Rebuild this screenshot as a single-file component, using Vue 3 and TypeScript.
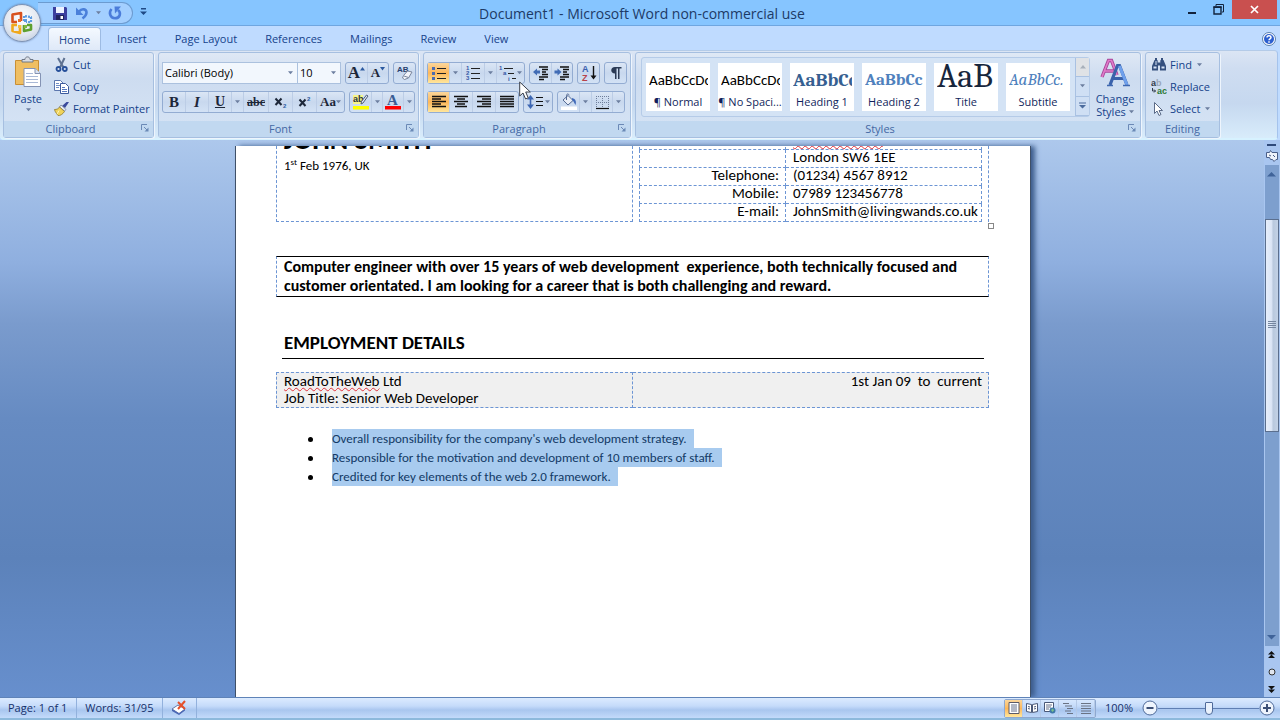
<script setup lang="ts">
import { h, ref } from 'vue'

interface StyleCard {
  sample: string
  name: string
  kind: string
}

// Small drop-down triangle used throughout the ribbon
const Caret = () => h('svg', { width: 5, height: 4, viewBox: '0 0 6 4' }, [h('path', { d: 'M0 0h6L3 3.5z', fill: '#6d7fa0' })])

// Corner arrow that opens a group's dialog
const Corner = () =>
  h('svg', { width: 8, height: 8, viewBox: '0 0 8 8' }, [
    h('path', { d: 'M.5 6V.5H6M3 3l3 3', fill: 'none', stroke: '#6b89b6' }),
    h('path', { d: 'M7.5 3.5v4h-4z', fill: '#6b89b6' }),
  ])

const tabs: string[] = ['Home', 'Insert', 'Page Layout', 'References', 'Mailings', 'Review', 'View']
const activeTab = ref<string>('Home')
const fontName = ref<string>('Calibri (Body)')
const fontSize = ref<string>('10')
const zoom = ref<number>(100)

const styleCards: StyleCard[] = [
  { sample: 'AaBbCcDc', name: '¶ Normal', kind: 'plain' },
  { sample: 'AaBbCcDc', name: '¶ No Spaci...', kind: 'plain' },
  { sample: 'AaBbCc', name: 'Heading 1', kind: 'h1' },
  { sample: 'AaBbCc', name: 'Heading 2', kind: 'h2' },
  { sample: 'AaB', name: 'Title', kind: 'title' },
  { sample: 'AaBbCc.', name: 'Subtitle', kind: 'sub' },
]

const contacts: { label: string; value: string }[] = [
  { label: '', value: 'London SW6 1EE' },
  { label: 'Telephone:', value: '(01234) 4567 8912' },
  { label: 'Mobile:', value: '07989 123456778' },
  { label: 'E-mail:', value: 'JohnSmith@livingwands.co.uk' },
]

const bullets: string[] = [
  "Overall responsibility for the company's web development strategy.",
  'Responsible for the motivation and development of 10 members of staff.',
  'Credited for key elements of the web 2.0 framework.',
]
</script>

<template>
  <div class="app">
    <header class="titlebar">
      <div class="qat">
        <button class="bare" aria-label="Save">
          <svg width="16" height="16" viewBox="0 0 16 16"><path d="M1 2h13l1 1v12H1z" fill="#3b3f9e" /><path d="M4 2h8v6H4z" fill="#eef3ff" /><path d="M4 10h8v5H4z" fill="#20245e" /><path d="M8.500 11h2.500v3H8.500z" fill="#fff" /></svg>
        </button>
        <button class="bare" aria-label="Undo">
          <svg width="16" height="16" viewBox="0 0 16 16"><path d="M5 6.500c3-3.500 7.500-2.500 7.500 1 0 3-2 4.500-4 6" fill="none" stroke="#4b80da" stroke-width="2.600" /><path d="M2 2.500v7.500h7.500z" fill="#4b80da" /></svg>
        </button>
        <button class="bare narrow" aria-label="Undo history"><Caret /></button>
        <button class="bare" aria-label="Repeat">
          <svg width="16" height="16" viewBox="0 0 16 16"><path d="M4.500 4C1.500 7.500 3 13.300 8 13.300S14.500 8 11 5" fill="none" stroke="#4b7cda" stroke-width="2.600" /><path d="M7.500 1.500H14l-6 7z" fill="#4b7cda" /></svg>
        </button>
      </div>
      <button class="bare custom" aria-label="Customize Quick Access Toolbar"><svg width="7" height="8" viewBox="0 0 7 8"><path d="M1 0h5v1.500H1zM0 3.500h7L3.500 7z" fill="#1f4a86" /></svg></button>
      <h1 class="caption">Document1 - Microsoft Word non-commercial use</h1>
      <div class="winbtns">
        <button class="win" aria-label="Minimize"><svg width="10" height="10" viewBox="0 0 10 10"><path d="M1 7h8v2H1z" fill="#12233c" /></svg></button>
        <button class="win" aria-label="Restore"><svg width="11" height="11" viewBox="0 0 11 11"><path d="M3 2V.500h7.500V8H9" fill="none" stroke="#12233c" /><path d="M1 3h7v7H1z" fill="none" stroke="#12233c" stroke-width="1.400" /><path d="M.500 2.500h8V4h-8z" fill="#12233c" /></svg></button>
        <button class="win close" aria-label="Close"><svg width="9" height="9" viewBox="0 0 9 9"><path d="M1 1l7 7M8 1L1 8" stroke="#fff" stroke-width="1.700" /></svg></button>
      </div>
    </header>

    <button class="office" aria-label="Office Button">
      <svg width="24" height="24" viewBox="0 0 24 24" fill="none" stroke-linejoin="round">
        <path d="M7 11H2.500V3.500L11 2v8" stroke="#d8511d" stroke-width="2.600" />
        <path d="M14 10V5l7 1v5h-5" stroke="#5c9be0" stroke-width="2.200" stroke-dasharray="2 1" />
        <path d="M10 14v8l-7.500-2v-6H7" stroke="#f0a81c" stroke-width="2.600" />
        <path d="M14 14v6l7-1.500V14h-4" stroke="#5ea02e" stroke-width="2.600" />
        <path d="M8 8h3v3H8z" fill="#e8702a" /><path d="M14 8h3v3h-3z" fill="#5c9be0" /><path d="M8 14h3v3H8z" fill="#f5c043" /><path d="M14 14h3v3h-3z" fill="#7fb840" />
      </svg>
    </button>

    <nav class="tabs">
      <button v-for="t in tabs" :key="t" class="tab" :class="{ active: t === activeTab }" @click="activeTab = t">{{ t }}</button>
      <button class="bare help" aria-label="Help">
        <svg width="14" height="14" viewBox="0 0 14 14"><circle cx="7" cy="7" r="6.500" fill="#fff" stroke="#5a7fae" /><circle cx="7" cy="7" r="5" fill="#2c5fcf" /><path d="M5 5.500C5 3 9 3 9 5.500 9 7 7 6.800 7 8.300M7 9.300v1.500" fill="none" stroke="#fff" stroke-width="1.500" /></svg>
      </button>
    </nav>

    <section class="ribbon">
      <div class="group clipboard">
        <div class="body">
          <button class="big paste">
            <svg width="28" height="32" viewBox="0 0 28 32"><path d="M1.500 4.500h23v24h-23z" fill="#efbe62" stroke="#c98f34" /><path d="M8 6V3.500h3C11 0 16 0 16 3.500h3V6z" fill="#d9dde4" stroke="#6f7886" /><path d="M10 12.500h11l5.500 5v13H10z" fill="#fff" stroke="#8493b4" /><path d="M21 12.500v5h5.500" fill="#dbe4f3" stroke="#8493b4" /><path d="M12 17.500h7M12 20.500h12M12 23.500h12M12 26.500h12" stroke="#a9b9d6" /></svg>
            <span>Paste</span>
            <Caret />
          </button>
          <div class="stack">
            <button class="item">
              <svg width="16" height="16" viewBox="0 0 16 16" fill="none"><path d="M4 1l5.500 9.500M10.500 1L6 10.500" stroke="#5f7291" stroke-width="2" /><circle cx="4.500" cy="12" r="2" stroke="#27509a" stroke-width="1.800" /><circle cx="10.800" cy="12" r="2" stroke="#27509a" stroke-width="1.800" /></svg>Cut
            </button>
            <button class="item">
              <svg width="16" height="16" viewBox="0 0 16 16"><path d="M.500 1.500h6l2.500 2.500v7.500H.500z" fill="#fff" stroke="#5c77ae" /><path d="M2 4.500h3M2 6.500h4M2 8.500h3" stroke="#6f8cc4" /><path d="M6.500 4.500h5l3 3v7h-8z" fill="#fff" stroke="#3c5a9c" /><path d="M8 8.500h3M8 10.500h5M8 12.500h5" stroke="#5578bd" /></svg>Copy
            </button>
            <button class="item">
              <svg width="16" height="16" viewBox="0 0 16 16"><path d="M15 1l-4 6-3-2 4.500-4z" fill="#3a4a9c" /><path d="M7 4l5 4.500-1.500 1.500-5-4z" fill="#e9edf5" stroke="#74819a" stroke-width=".800" /><path d="M5.500 6l5 4.500C9 13 6 15 4 14.500 3 13 1 11 .500 8.500 2.500 8.500 4.500 8 5.500 6z" fill="#f0d35a" stroke="#8f7a2a" stroke-width=".800" /><path d="M5 9.500L3 13" stroke="#fff6bd" /></svg>Format Painter
            </button>
          </div>
        </div>
        <div class="foot"><span>Clipboard</span><button class="bare launch" aria-label="Clipboard options"><Corner /></button></div>
      </div>

      <div class="group font">
        <div class="body rows">
          <div class="row">
            <div class="combo wide"><select v-model="fontName" aria-label="Font"><option>Calibri (Body)</option></select><Caret class="drop" /></div>
            <div class="combo slim"><select v-model="fontSize" aria-label="Font size"><option>10</option></select><Caret class="drop" /></div>
            <div class="strip">
              <button class="tool t21" aria-label="Grow font"><span class="glyph g17">A</span><svg class="tri" width="5" height="4" viewBox="0 0 5 4"><path d="M0 3.500h5L2.500 0z" fill="#2c5aa0" /></svg></button>
              <button class="tool t21" aria-label="Shrink font"><span class="glyph g13">A</span><svg class="tri" width="5" height="4" viewBox="0 0 5 4"><path d="M0 0h5L2.500 3.500z" fill="#2c5aa0" /></svg></button>
            </div>
            <div class="strip">
              <button class="tool t21" aria-label="Clear formatting"><svg width="18" height="18" viewBox="0 0 18 18"><text x="1" y="8" font-size="8" font-weight="bold" font-family="Liberation Sans, sans-serif" fill="#26406e">AB</text><path d="M7.500 11.500l4-4.500 4.500 1-3.500 6-4 1.500-2-1.500z" fill="#f2f4fa" stroke="#7a869e" /><path d="M8 12l4.500 1.500" stroke="#7a869e" /></svg></button>
            </div>
          </div>
          <div class="row">
            <div class="strip">
              <button class="tool t22"><span class="glyph g15">B</span></button>
              <button class="tool t23"><span class="glyph g15 ital">I</span></button>
              <button class="tool t23"><span class="glyph g14 under">U</span></button>
              <button class="tool t12" aria-label="Underline style"><Caret /></button>
              <button class="tool t25"><span class="glyph g12 strike">abc</span></button>
              <button class="tool t24" aria-label="Subscript"><svg width="14" height="14" viewBox="0 0 14 14"><path d="M1.500 3.500l6 6.500M7.500 3.500l-6 6.500" stroke="#1d2739" stroke-width="2" /><text x="9" y="13" font-size="6" font-weight="bold" font-family="Liberation Sans, sans-serif" fill="#2c5aa0">2</text></svg></button>
              <button class="tool t24" aria-label="Superscript"><svg width="14" height="14" viewBox="0 0 14 14"><path d="M1.500 4.500l6 6.500M7.500 4.500l-6 6.500" stroke="#1d2739" stroke-width="2" /><text x="9" y="6" font-size="6" font-weight="bold" font-family="Liberation Sans, sans-serif" fill="#2c5aa0">2</text></svg></button>
              <button class="tool t28" aria-label="Change case"><span class="glyph g13">Aa</span><Caret /></button>
            </div>
            <div class="strip">
              <button class="tool t21" aria-label="Text highlight color"><svg width="18" height="18" viewBox="0 0 18 18"><path d="M1 2h10v9H1z" fill="#f7f58a" /><text x="1" y="9" font-size="9" font-family="Liberation Sans, sans-serif" font-weight="bold" fill="#2b3240">ab</text><path d="M16 3l-5 7-2 1 .500-2.500L14.500 2z" fill="#e3e8f2" stroke="#4c5d7c" /><path d="M1 13h16v3.500H1z" fill="#ff0" /></svg></button>
              <button class="tool t11" aria-label="Highlight colors"><Caret /></button>
              <button class="tool t21" aria-label="Font color"><svg width="18" height="18" viewBox="0 0 18 18"><text x="3" y="12" font-size="15" font-family="Liberation Serif, serif" font-weight="bold" fill="#3a5d94">A</text><path d="M1 13h16v3.500H1z" fill="#f00" /></svg></button>
              <button class="tool t11" aria-label="Font colors"><Caret /></button>
            </div>
          </div>
        </div>
        <div class="foot"><span>Font</span><button class="bare launch" aria-label="Font options"><Corner /></button></div>
      </div>

      <div class="group para">
        <div class="body rows">
          <div class="row">
            <div class="strip">
              <button class="tool t21 on" aria-label="Bullets"><svg width="16" height="16" viewBox="0 0 16 16"><path d="M1 2h3v3H1zM1 7h3v3H1zM1 12h3v3H1z" fill="#4c6cb0" /><path d="M6 3.500h9M6 8.500h9M6 13.500h9" stroke="#222" stroke-width="1.200" /></svg></button>
              <button class="tool t12" aria-label="Bullet library"><Caret /></button>
              <button class="tool t23" aria-label="Numbering"><svg width="16" height="16" viewBox="0 0 16 16"><g font-size="6" font-weight="bold" font-family="Liberation Sans, sans-serif" fill="#3557a5"><text x="1" y="5">1</text><text x="1" y="10">2</text><text x="1" y="15">3</text></g><path d="M6 3.500h9M6 8.500h9M6 13.500h9" stroke="#222" stroke-width="1.200" /></svg></button>
              <button class="tool t12" aria-label="Numbering library"><Caret /></button>
              <button class="tool t28" aria-label="Multilevel list"><svg width="18" height="16" viewBox="0 0 18 16"><g font-size="6" font-weight="bold" font-family="Liberation Sans, sans-serif" fill="#3557a5"><text x="0" y="5">1</text><text x="4" y="10">a</text><text x="9" y="16">i</text></g><path d="M5 3.500h9M9 8.500h6M13 13.500h4" stroke="#222" stroke-width="1.200" /></svg><Caret /></button>
            </div>
            <div class="strip">
              <button class="tool t21" aria-label="Decrease indent"><svg width="16" height="16" viewBox="0 0 16 16"><path d="M6 2h9M9 4.500h6M9 7h4M9 9.500h6M6 12h9M6 14.500h5" stroke="#111" stroke-width="1.300" /><path d="M0 7l4-3.500v2h3v3H4v2z" fill="#416cb5" /></svg></button>
              <button class="tool t21" aria-label="Increase indent"><svg width="16" height="16" viewBox="0 0 16 16"><path d="M6 2h9M9 4.500h6M9 7h4M9 9.500h6M6 12h9M6 14.500h5" stroke="#111" stroke-width="1.300" /><path d="M7.500 7l-4-3.500v2h-3v3h3v2z" fill="#416cb5" /></svg></button>
            </div>
            <div class="strip">
              <button class="tool t21" aria-label="Sort"><svg width="16" height="18" viewBox="0 0 16 18"><g font-size="9" font-weight="bold" font-family="Liberation Sans, sans-serif"><text x="1" y="8" fill="#3b5fae">A</text><text x="1" y="17" fill="#b8424a">Z</text></g><path d="M12.500 2v12" stroke="#111" stroke-width="1.400" /><path d="M9.500 11.500h6l-3 4z" fill="#111" /></svg></button>
            </div>
            <div class="strip">
              <button class="tool t21" aria-label="Show formatting marks"><svg width="14" height="14" viewBox="0 0 14 14"><path d="M12.500 1H6C1 1 1 7.500 6 7.500V13h1.500V2.500H9V13h1.500V2.500h2z" fill="#2b3a55" /></svg></button>
            </div>
          </div>
          <div class="row">
            <div class="strip">
              <button class="tool t21 on" aria-label="Align left"><svg width="16" height="14" viewBox="0 0 16 14"><path d="M1 1.500h14M1 4h9M1 6.500h14M1 9h9M1 11.500h14" stroke="#111" stroke-width="1.300" /></svg></button>
              <button class="tool t23" aria-label="Center"><svg width="16" height="14" viewBox="0 0 16 14"><path d="M1 1.500h14M4 4h8M1 6.500h14M4 9h8M2 11.500h12" stroke="#111" stroke-width="1.300" /></svg></button>
              <button class="tool t23" aria-label="Align right"><svg width="16" height="14" viewBox="0 0 16 14"><path d="M1 1.500h14M6 4h9M1 6.500h14M6 9h9M1 11.500h14" stroke="#111" stroke-width="1.300" /></svg></button>
              <button class="tool t23" aria-label="Justify"><svg width="16" height="14" viewBox="0 0 16 14"><path d="M1 1.500h14M1 4h14M1 6.500h14M1 9h14M1 11.500h14" stroke="#111" stroke-width="1.300" /></svg></button>
            </div>
            <div class="strip">
              <button class="tool t28" aria-label="Line spacing"><svg width="16" height="16" viewBox="0 0 16 16"><path d="M3.500 4v8" stroke="#3d67b3" stroke-width="1.600" /><path d="M0 5.500h7L3.500 1zM0 10.500h7L3.500 15z" fill="#3d67b3" /><path d="M9 3.500h7M9 7.500h7M9 11.500h7" stroke="#111" stroke-width="1.200" /></svg><Caret class="gap" /></button>
            </div>
            <div class="strip">
              <button class="tool t21" aria-label="Shading"><svg width="18" height="18" viewBox="0 0 18 18"><path d="M3 7l5-4.500 5 5L8 12z" fill="#e8edf6" stroke="#546a93" /><path d="M6.500 7V2.500c0-2 2.500-2 2.500 0" fill="none" stroke="#546a93" /><path d="M12 5c4 1 4.500 4 3.500 7-1.500-2-1.500-4-3.500-5z" fill="#4069b8" /><path d="M1 13.500h16V17H1z" fill="#fff" /></svg></button>
              <button class="tool t12" aria-label="Shading colors"><Caret /></button>
              <button class="tool t21" aria-label="Borders"><svg width="15" height="15" viewBox="0 0 15 15"><path d="M1 1.500h13M1 7.500h13M1.500 1v12M7.500 1v12M13.500 1v12" stroke="#6f7f9b" stroke-dasharray="1 1" /><path d="M1 13.500h13" stroke="#111" stroke-width="1.200" /></svg></button>
              <button class="tool t12" aria-label="Border styles"><Caret /></button>
            </div>
          </div>
        </div>
        <div class="foot"><span>Paragraph</span><button class="bare launch" aria-label="Paragraph options"><Corner /></button></div>
      </div>

      <div class="group styles">
        <div class="body">
          <div class="gallery">
            <div class="cards">
              <button v-for="c in styleCards" :key="c.name" class="card">
                <span class="sample" :class="c.kind">{{ c.sample }}</span>
                <span class="name">{{ c.name }}</span>
              </button>
            </div>
            <div class="spin">
              <button aria-label="Previous styles" class="dim"><svg width="6" height="4" viewBox="0 0 6 4"><path d="M0 3.500h6L3 0z" fill="#a8b0bb" /></svg></button>
              <button aria-label="Next styles"><Caret /></button>
              <button aria-label="More styles"><svg width="7" height="7" viewBox="0 0 7 7"><path d="M0 .500h7v1H0zM0 3h7L3.500 6.500z" fill="#4c6c9e" /></svg></button>
            </div>
          </div>
          <button class="big change">
            <svg width="30" height="30" viewBox="0 0 30 30" fill="none"><path d="M2 19L8.500 2.500h3L17 17M4.500 13h9" stroke="#a8459a" stroke-width="3.400" /><path d="M2 19L8.500 2.500h3L17 17M4.500 13h9" stroke="#e07cc9" stroke-width="1.600" /><path d="M10 27L17.500 7.500h2L27 27M13 20.500h11" stroke="#3a62ab" stroke-width="3.200" /><path d="M19.500 8L27 27" stroke="#6fa0ec" stroke-width="3" /><path d="M7 27.500h6M23 27.500h7" stroke="#3f68b0" stroke-width="1.500" /></svg>
            <span>Change</span>
            <span class="withcaret">Styles <Caret /></span>
          </button>
        </div>
        <div class="foot"><span>Styles</span><button class="bare launch" aria-label="Style options"><Corner /></button></div>
      </div>

      <div class="group editing">
        <div class="body">
          <div class="stack">
            <button class="item">
              <svg width="16" height="16" viewBox="0 0 16 16"><path d="M3.500 3h3l.500 4v6.500H1V9zM9.500 3h3L15 9v4.500H9V7z" fill="#35507e" /><path d="M4 1h2v2H4zM10 1h2v2h-2zM7 5.500h2v3H7z" fill="#35507e" /><path d="M2.500 9.500h3v2h-3zM10.500 9.500h3v2h-3zM4.500 4h1v4h-1z" fill="#d5e2f5" /></svg>Find<Caret class="gap" />
            </button>
            <button class="item">
              <svg width="16" height="16" viewBox="0 0 16 16" font-size="9" font-weight="bold" font-family="Liberation Sans, sans-serif"><text x="0" y="7" fill="#333c4c">a</text><text x="5" y="7" fill="#9aa6b8">b</text><text x="6" y="15" fill="#2c7a35">ac</text><path d="M1.500 9v3h3M3 10.500L4.500 12 3 13.500" stroke="#333c4c" fill="none" /></svg>Replace
            </button>
            <button class="item">
              <svg width="16" height="16" viewBox="0 0 16 16"><path d="M3.500 1.500v11l2.500-2.500 2 4.500 2-1-2-4h3.500z" fill="#fff" stroke="#5b6b88" /></svg>Select<Caret class="gap" />
            </button>
          </div>
        </div>
        <div class="foot"><span>Editing</span></div>
      </div>
    </section>

    <main class="workspace">
      <div class="canvas">
        <article class="page">
          <div class="cvtop">
            <div class="who">
              <h2>JOHN SMITH</h2>
              <p>1<sup>st</sup> Feb 1976, UK</p>
            </div>
            <table class="contact">
              <tbody>
                <tr><th></th><td><span class="typo">Roadtotheweb</span> Rg</td></tr>
                <tr v-for="c in contacts" :key="c.value"><th scope="row">{{ c.label }}</th><td>{{ c.value }}</td></tr>
              </tbody>
            </table>
            <span class="handle"></span>
          </div>
          <p class="summary">Computer engineer with over 15 years of web development&nbsp; experience, both technically focused and<br />customer orientated. I am looking for a career that is both challenging and reward.</p>
          <h3>EMPLOYMENT DETAILS</h3>
          <table class="job">
            <tbody>
              <tr>
                <td><span class="typo">RoadToTheWeb</span> Ltd<br />Job Title: Senior Web Developer</td>
                <td class="dates">1st Jan 09&nbsp; to&nbsp; current</td>
              </tr>
            </tbody>
          </table>
          <ul class="bullets">
            <li v-for="b in bullets" :key="b"><span>{{ b }}</span></li>
          </ul>
        </article>
      </div>
      <aside class="scroll">
        <span class="split"></span>
        <button class="bare ruler" aria-label="View ruler"><svg width="12" height="12" viewBox="0 0 12 12"><path d="M.500 2.500h3l1-2 1.500 2h5.500v7H10l-2 2-1.500-2h-2l-1-2h-3z" fill="#eef3fb" stroke="#4a5f88" /><path d="M3 5l2 1M7 5l2 2" stroke="#4a5f88" /></svg></button>
        <button class="bare arrow" aria-label="Scroll up"><svg width="9" height="5" viewBox="0 0 9 5"><path d="M0 4.500h9L4.500 0z" fill="#3f6399" /></svg></button>
        <div class="track"><div class="thumb"><svg width="8" height="8" viewBox="0 0 8 8"><path d="M0 .500h8M0 2.500h8M0 4.500h8M0 6.500h8" stroke="#75869f" /></svg></div></div>
        <button class="bare arrow" aria-label="Scroll down"><svg width="9" height="5" viewBox="0 0 9 5"><path d="M0 0h9L4.500 4.500z" fill="#3f6399" /></svg></button>
        <button class="bare nav" aria-label="Previous page"><svg width="7" height="8" viewBox="0 0 7 8"><path d="M0 3.500h7L3.500 0zM0 7h7L3.500 3.500z" fill="#111" /></svg></button>
        <button class="bare nav" aria-label="Select browse object"><svg width="8" height="8" viewBox="0 0 8 8"><circle cx="4" cy="4" r="3" fill="#dfe5ee" stroke="#333" /></svg></button>
        <button class="bare nav" aria-label="Next page"><svg width="7" height="8" viewBox="0 0 7 8"><path d="M0 1h7L3.500 4.500zM0 4.500h7L3.500 8z" fill="#111" /></svg></button>
      </aside>
    </main>

    <footer class="status">
      <button class="bare cell">Page: 1 of 1</button>
      <button class="bare cell">Words: 31/95</button>
      <button class="bare cell" aria-label="Proofing errors"><svg width="16" height="16" viewBox="0 0 16 16"><path d="M1 9l6-4 7 4-6 4.500z" fill="#fff" stroke="#6679a8" /><path d="M1 9v2l7 4 6-4.500V9l-6 4.500z" fill="#4a66b5" /><path d="M7 2l7 7M14 1L7 9" stroke="#e4502b" stroke-width="2" /></svg></button>
      <span class="grow"></span>
      <div class="views">
        <button class="on" aria-label="Print layout"><svg width="12" height="12" viewBox="0 0 12 12"><path d="M1 .500h10v11H1z" fill="#fff" stroke="#5a5a68" /><path d="M3 3h6M3 5h6M3 7h6M3 9h6" stroke="#66708a" /></svg></button>
        <button aria-label="Full screen reading"><svg width="12" height="12" viewBox="0 0 12 12"><path d="M.500 1.500l5 1v8l-5-1zM11.500 1.500l-5 1v8l5-1z" fill="#fff" stroke="#4a5877" /><path d="M2 4.500l2 .500M2 6.500l2 .500M8 5l2-.500M8 7l2-.500" stroke="#4a5877" /></svg></button>
        <button aria-label="Web layout"><svg width="12" height="12" viewBox="0 0 12 12"><path d="M.500.500h9v9h-9z" fill="#fff" stroke="#4a5877" /><path d="M2 3h6M2 5h5M2 7h3" stroke="#66708a" /><circle cx="8.500" cy="8.500" r="3" fill="#3f78a8" /><path d="M7 8l2-1.500 1 2-1.500 1.500z" fill="#7cc08a" /></svg></button>
        <button aria-label="Outline"><svg width="12" height="12" viewBox="0 0 12 12"><path d="M1 1.500h6M3 4h7M5 6.500h6M3 9h6M5 11.500h6" stroke="#6a7384" /></svg></button>
        <button aria-label="Draft"><svg width="12" height="12" viewBox="0 0 12 12"><path d="M1 1.500h10M1 4h10M1 6.500h10M1 9h10M1 11.500h10" stroke="#6a7384" /></svg></button>
      </div>
      <span class="pct">{{ zoom }}%</span>
      <button class="bare" aria-label="Zoom out"><svg width="16" height="16" viewBox="0 0 16 16"><circle cx="8" cy="8" r="7" fill="#eef4fd" stroke="#4f6a9a" /><path d="M4.500 8h7" stroke="#3c4f76" stroke-width="2" /></svg></button>
      <input v-model.number="zoom" class="slider" type="range" min="0" max="200" aria-label="Zoom" />
      <button class="bare" aria-label="Zoom in"><svg width="16" height="16" viewBox="0 0 16 16"><circle cx="8" cy="8" r="7" fill="#eef4fd" stroke="#4f6a9a" /><path d="M4 8h8M8 4v8" stroke="#3c4f76" stroke-width="2" /></svg></button>
    </footer>

    <svg class="pointer" width="14" height="20" viewBox="0 0 14 20"><path d="M.700 1v14l3.300-3 2.600 6 2.600-1.200L6.700 11h4.600z" fill="#fff" stroke="#3a3f4a" /></svg>
  </div>
</template>

<style>
html,
body {
  margin: 0;
  overflow: hidden;
}
</style>

<style scoped>
.app {
  position: relative;
  display: flex;
  flex-direction: column;
  height: 100vh;
  overflow: hidden;
  background: #bfdbff;
  color: #15428b;
  font-family: 'Segoe UI', 'Open Sans', 'Noto Sans', sans-serif;
  font-size: 11px;
  line-height: 16px;
}
.app * {
  box-sizing: border-box;
}
button {
  margin: 0;
  padding: 0;
  border: 0;
  background: none;
  color: inherit;
  font: inherit;
  white-space: nowrap;
}
.bare {
  display: flex;
  align-items: center;
  justify-content: center;
}
svg {
  flex: none;
}

/* title bar */
.titlebar {
  display: flex;
  align-items: flex-start;
  height: 26px;
  flex: none;
  background: #86c5ff;
  border-bottom: 1px solid #6fa6e0;
}
.qat {
  display: flex;
  align-items: center;
  gap: 6px;
  width: 95px;
  height: 22px;
  margin: 2px 0 0 38px;
  padding-left: 14px;
  border: 1px solid #6c9bd0;
  border-left: 0;
  border-radius: 0 11px 11px 0;
  background: #a3cfff;
}
.narrow {
  width: 5px;
}
.custom {
  width: 20px;
  height: 24px;
}
.caption {
  flex: 1;
  margin: 0;
  text-align: center;
  font-size: 14px;
  font-weight: 400;
  line-height: 27px;
  color: #1d3a66;
}
.winbtns {
  display: flex;
  justify-content: flex-end;
  width: 149px;
}
.win {
  display: flex;
  align-items: center;
  justify-content: center;
  width: 26px;
  height: 19px;
}
.close {
  width: 45px;
  margin: 0 3px 0 1px;
  background: #c9504f;
}
.office {
  position: absolute;
  left: 3px;
  top: 4px;
  display: flex;
  align-items: center;
  justify-content: center;
  width: 38px;
  height: 38px;
  border: 1px solid #7f93b3;
  border-radius: 50%;
  background: radial-gradient(circle at 50% 35%, #ffffff, #dfe5ef 60%, #b3c2d9);
  box-shadow: 0 0 2px #5f7ba6;
}

/* tabs */
.tabs {
  display: flex;
  flex: none;
  height: 24px;
  padding: 1px 4px 0 48px;
}
.tab {
  height: 23px;
  padding: 0 14px;
  line-height: 24px;
}
.tab.active {
  margin-right: 2px;
  padding: 0 10px;
  border: 1px solid #9dbbe3;
  border-bottom: 0;
  border-radius: 4px 4px 0 0;
  background: linear-gradient(#f4f9ff, #dfe9f8);
}
.help {
  width: 14px;
  margin-left: auto;
}

/* ribbon */
.ribbon {
  display: flex;
  gap: 4px;
  flex: none;
  height: 90px;
  margin-right: 2px;
  padding: 1px 4px 1px 3px;
  border: 1px solid #a5c3ec;
  border-left: 0;
  border-top-color: #b4cbe8;
  border-bottom: 2px solid #d7f2ff;
  border-radius: 4px;
  background: linear-gradient(#dbe5f4 0, #cfddf1 20%, #c6d8ef 60%, #d8ecfb 100%);
}
.group {
  display: flex;
  flex-direction: column;
  height: 86px;
  border: 1px solid #a6bfe0;
  border-radius: 3px;
  box-shadow: 1px 1px 0 #eef5fd;
  background: linear-gradient(#dfe8f5, #cddcf0 30%, #d6e4f5);
}
.body {
  display: flex;
  flex: 1;
}
.foot {
  position: relative;
  height: 16px;
  flex: none;
  padding-right: 16px;
  background: #c1d8f0;
  text-align: center;
  color: #4468a4;
  line-height: 16px;
}
.editing .foot {
  padding-right: 0;
}
.launch {
  position: absolute;
  right: 4px;
  top: 3px;
}
.clipboard {
  width: 151px;
}
.font {
  width: 261px;
}
.para {
  width: 208px;
}
.styles {
  width: 506px;
}
.editing {
  width: 75px;
}
.big {
  display: flex;
  flex-direction: column;
  align-items: center;
}
.paste {
  width: 48px;
  padding-top: 3px;
}
.paste span {
  margin: 2px 0 1px;
  line-height: 17px;
}
.stack {
  display: flex;
  flex-direction: column;
  padding: 1px 0 0 2px;
}
.item {
  display: flex;
  align-items: center;
  gap: 3px;
  height: 22px;
}
.editing .stack {
  padding-left: 5px;
}
.rows {
  flex-direction: column;
  gap: 7px;
  padding: 9px 0 0 3px;
}
.row {
  display: flex;
  gap: 4px;
}
.combo {
  position: relative;
  display: flex;
  height: 22px;
  border: 1px solid #abc1de;
  background: #f2f7fd;
}
.combo select {
  width: 100%;
  padding: 0 0 0 2px;
  border: 0;
  outline: 0;
  appearance: none;
  background: none;
  color: #000;
  font: inherit;
}
.drop {
  position: absolute;
  right: 4px;
  top: 8px;
  pointer-events: none;
}
.wide {
  width: 136px;
}
.slim {
  width: 43px;
  margin-left: -4px;
  border-left: 0;
}
.strip {
  display: flex;
  height: 22px;
  border: 1px solid #93acd2;
  border-radius: 3px;
  background: linear-gradient(#dbe6f5, #c8d8ee 50%, #d3e2f5);
}
.tool {
  display: flex;
  align-items: center;
  justify-content: center;
  border-left: 1px solid #bccde6;
}
.tool:first-child {
  border-left: 0;
}
.on {
  background: linear-gradient(#fbd69b, #fdb75a 50%, #ffe69c);
}
.gap {
  margin-left: 2px;
}
.t11 {
  width: 11px;
}
.t12 {
  width: 12px;
}
.t21 {
  width: 21px;
}
.t22 {
  width: 22px;
}
.t23 {
  width: 23px;
}
.t24 {
  width: 24px;
}
.t25 {
  width: 25px;
}
.t28 {
  width: 28px;
}
.glyph {
  font-family: 'Liberation Serif', serif;
  font-weight: 700;
  color: #1d2739;
}
.g17 {
  font-size: 17px;
}
.g15 {
  font-size: 15px;
}
.g14 {
  font-size: 14px;
}
.g13 {
  font-size: 13px;
}
.g12 {
  font-size: 12px;
}
.ital {
  font-style: italic;
}
.under {
  text-decoration: underline;
}
.strike {
  text-decoration: line-through;
}
.tri {
  align-self: flex-start;
  margin-top: 4px;
}

/* style gallery */
.gallery {
  display: flex;
  height: 60px;
  margin: 4px 0 0 5px;
  border: 1px solid #b5cbe8;
  border-radius: 3px;
  background: #d4e3f5;
}
.cards {
  display: flex;
  gap: 8px;
  padding: 5px 5px 5px 4px;
}
.card {
  display: flex;
  flex-direction: column;
  width: 64px;
  height: 48px;
  overflow: hidden;
  background: #fff;
}
.sample {
  display: block;
  width: 59px;
  height: 31px;
  margin-left: 3px;
  overflow: hidden;
  text-align: left;
  line-height: 34px;
  color: #000;
}
.plain {
  font-family: Calibri, Carlito, Lato, sans-serif;
  font-size: 15px;
}
.h1,
.h2,
.title,
.sub {
  font-family: Cambria, Caladea, 'Noto Serif', 'Liberation Serif', serif;
}
.h1 {
  font-weight: 700;
  font-size: 19px;
  color: #365f91;
}
.h2 {
  font-weight: 700;
  font-size: 17px;
  color: #4f81bd;
}
.title {
  font-size: 34px;
  line-height: 26px;
  color: #17263c;
}
.sub {
  font-style: italic;
  font-size: 17px;
  color: #4f81bd;
}
.name {
  width: 64px;
  text-align: center;
  line-height: 16px;
  color: #111f5c;
}
.spin {
  display: flex;
  flex-direction: column;
  width: 14px;
}
.spin button {
  display: flex;
  flex: 1;
  align-items: center;
  justify-content: center;
  border-left: 1px solid #a9c1e2;
  border-bottom: 1px solid #a9c1e2;
  background: #cfdff4;
}
.spin .dim {
  background: #dfe2e6;
}
.change {
  width: 50px;
  padding-top: 5px;
}
.change span {
  line-height: 13px;
}
.change span:first-of-type {
  margin-top: 4px;
}
.withcaret {
  display: flex;
  align-items: center;
  gap: 3px;
}

/* document */
.workspace {
  display: flex;
  flex: 1;
  min-height: 0;
  background: linear-gradient(#adc8ec 0, #8fafdf 22%, #7a9bcd 33%, #668bc2 50%, #5c82ba 75%, #678fcd 100%);
}
.canvas {
  flex: 1;
  padding: 6px 0 0 2px;
  overflow: hidden;
}
.page {
  width: 796px;
  height: 100%;
  margin: 0 auto;
  padding: 0 41px 0 40px;
  border: solid #3f5068;
  border-width: 0 1px;
  background: #fff;
  box-shadow: 4px 0 5px #3c5c8c;
  overflow: hidden;
  color: #000;
  font-family: Calibri, Carlito, Lato, sans-serif;
  font-size: 15px;
  line-height: 18px;
}
.cvtop {
  position: relative;
  display: flex;
  align-items: flex-end;
  height: 76px;
  border-right: 1px dashed #6c95d4;
}
.who {
  display: flex;
  flex-direction: column;
  justify-content: flex-end;
  width: 357px;
  height: 76px;
  margin-right: 6px;
  padding: 0 0 46px 7px;
  border: 1px dashed #6c95d4;
  border-top: 0;
}
h2 {
  margin: 0;
  font-size: 28px;
  line-height: 34px;
}
.who p {
  margin: 0;
  font-size: 13px;
  line-height: 18px;
}
sup {
  font-size: 9px;
  line-height: 0;
}
table {
  border-collapse: collapse;
}
.contact {
  flex: 1;
  margin-right: 6px;
  table-layout: fixed;
}
.contact th,
.contact td {
  height: 18px;
  padding: 0 6px;
  border: 1px dashed #6c95d4;
  font-weight: 400;
  text-align: right;
  vertical-align: top;
  line-height: 15px;
}
.contact th {
  width: 146px;
}
.contact td {
  text-align: left;
  padding: 0 0 0 7px;
}
.typo {
  text-decoration: underline wavy #e0303a 1px;
  text-decoration-skip-ink: none;
  text-underline-offset: 1px;
}
.handle {
  position: absolute;
  right: -6px;
  bottom: -7px;
  width: 6px;
  height: 6px;
  border: 1px solid #888;
  background: #fff;
}
.summary {
  margin: 34px 0 0;
  padding: 0 0 1px 7px;
  border: 1px dashed #6c95d4;
  border-top: 1px solid #000;
  border-bottom: 1px solid #000;
  font-size: 16px;
  font-weight: 700;
  line-height: 19px;
  white-space: nowrap;
}
h3 {
  margin: 34px 5px 0 6px;
  padding: 0 0 4px 2px;
  border-bottom: 1px solid #000;
  font-size: 19px;
  line-height: 23px;
}
.job {
  width: 100%;
  margin-top: 13px;
  background: #f0f0f0;
}
.job td {
  width: 50%;
  padding: 0 6px 0 7px;
  border: 1px dashed #6c95d4;
  vertical-align: top;
  line-height: 17px;
}
.job .dates {
  text-align: right;
}
.bullets {
  margin: 21px 0 0;
  padding: 0 0 0 55px;
  list-style: none;
  font-size: 13px;
}
.bullets li {
  display: flex;
  height: 19px;
  align-items: stretch;
}
.bullets li::before {
  content: '';
  width: 5px;
  height: 5px;
  margin: 8px 19px 0 -23px;
  border-radius: 50%;
  background: #000;
}
.bullets span {
  padding-right: 7px;
  background: #a8cbef;
  color: #123a66;
  line-height: 19px;
}

/* scroll bar */
.scroll {
  display: flex;
  flex-direction: column;
  align-items: center;
  width: 16px;
  padding: 4px 1px 0 0;
  background: #a9c6f0;
}
.split {
  width: 9px;
  height: 2px;
  background: #2f4a7a;
}
.ruler {
  height: 19px;
}
.arrow {
  width: 14px;
  height: 18px;
  background: #7d9fce;
}
.track {
  flex: 1;
  width: 14px;
  padding-top: 36px;
  background: #7d9fce;
}
.thumb {
  display: flex;
  align-items: center;
  justify-content: center;
  height: 52%;
  border: 1px solid #5b6f8e;
  background: linear-gradient(90deg, #e6eefb 0, #dce6f6 45%, #b9c9de 60%, #c3d2e6);
}
.nav {
  width: 14px;
  height: 17px;
}

/* status bar */
.status {
  display: flex;
  align-items: center;
  flex: none;
  height: 23px;
  padding: 0 5px 0 0;
  border-top: 1px solid #5f83b8;
  border-bottom: 2px solid #8db9dc;
  background: linear-gradient(#dcebff, #c5dbfa 40%, #a9c6ef 60%, #c3dafb);
  color: #15306b;
}
.cell {
  height: 20px;
  padding: 0 9px 0 8px;
  border-right: 1px solid #92b1dd;
}
.grow {
  flex: 1;
}
.views {
  display: flex;
  height: 19px;
  border: 1px solid #8ea8d0;
  border-radius: 2px;
}
.views button {
  display: flex;
  align-items: center;
  justify-content: center;
  width: 18px;
  border-right: 1px solid #b5c9e6;
}
.pct {
  margin: 0 9px;
}
.slider {
  width: 101px;
  height: 18px;
  margin: 0;
  appearance: none;
  background: linear-gradient(#5f7fb3, #5f7fb3) center / 100% 1px no-repeat;
}
.slider::-webkit-slider-thumb {
  appearance: none;
  width: 8px;
  height: 13px;
  border: 1px solid #4f6a9a;
  border-radius: 1px 1px 4px 4px;
  background: #e9f1fc;
}
.pointer {
  position: absolute;
  left: 519px;
  top: 81px;
}
</style>
